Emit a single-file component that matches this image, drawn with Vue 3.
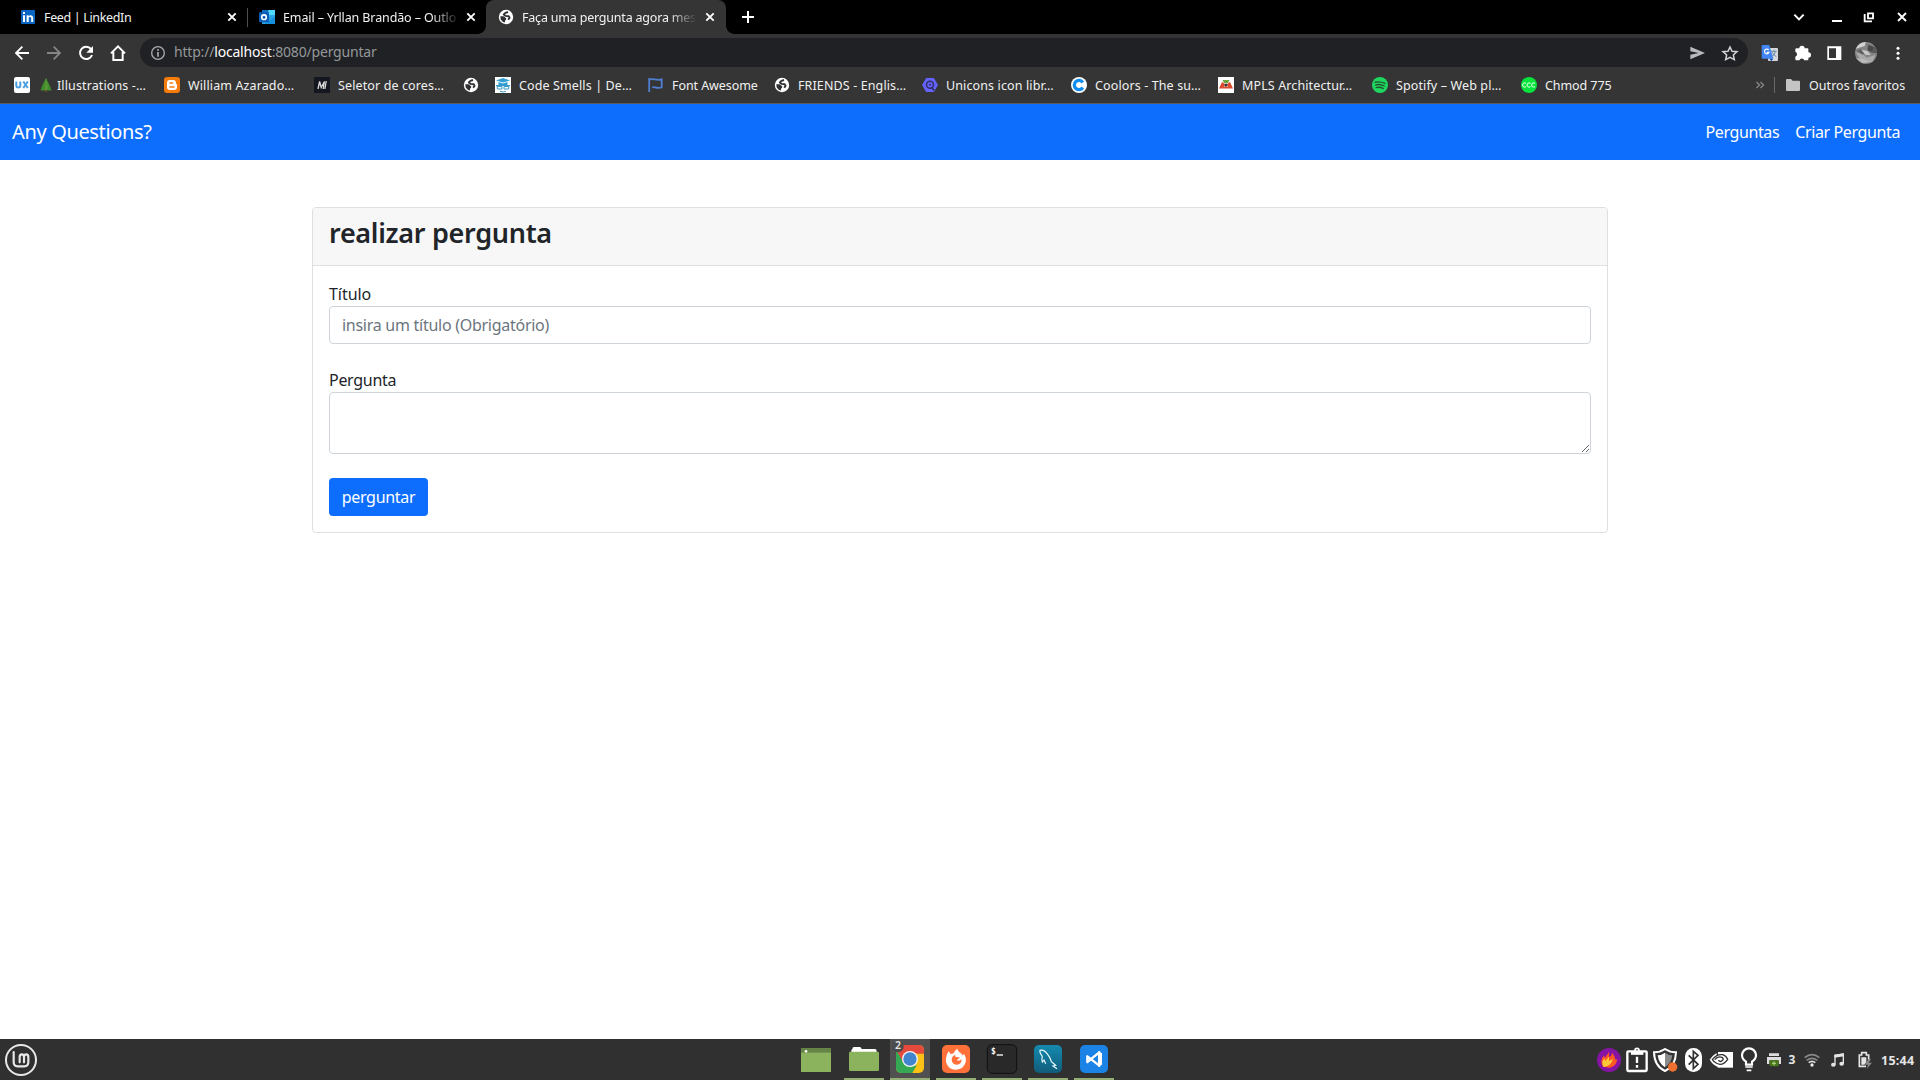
<script setup>
import { ref } from 'vue'

const title = ref('')
const question = ref('')

const bookmarks = [
  { id: 'ux', text: 'Illustrations -…', width: 150, tree: true },
  { id: 'blogger', text: 'William Azarado…', width: 150 },
  { id: 'm', text: 'Seletor de cores…', width: 149 },
  { id: 'globe', text: '', width: 32 },
  { id: 'code', text: 'Code Smells | De…', width: 153 },
  { id: 'flag', text: 'Font Awesome', width: 126 },
  { id: 'globe', text: 'FRIENDS - Englis…', width: 148 },
  { id: 'unicons', text: 'Unicons icon libr…', width: 149 },
  { id: 'coolors', text: 'Coolors - The su…', width: 147 },
  { id: 'mpls', text: 'MPLS Architectur…', width: 154 },
  { id: 'spotify', text: 'Spotify – Web pl…', width: 149 },
  { id: 'ccc', text: 'Chmod 775', width: 110 }
]
</script>

<template>
  <div class="screen">
    <svg class="defs" width="0" height="0">
      <symbol id="globe" viewBox="0 0 16 16">
        <circle cx="8" cy="8" r="7.2" fill="#fff" />
        <path d="M10 3 7.400 3.800 5.800 5.400 7.600 6.900 10.700 7.200 11.600 8.800 10.200 10.800" fill="none" stroke="#303134" stroke-width="1.900" stroke-linejoin="round" />
        <path d="M2.300 7.200h3.200l2.700 2-.2 1.800-1 .4v2L5 12.900l-2.300-2.400z" fill="#303134" />
      </symbol>
      <symbol id="close" viewBox="0 0 12 12"><path d="M2.300 2.300l7.400 7.400M9.700 2.300 2.300 9.700" stroke="#fff" stroke-width="1.900" /></symbol>
    </svg>

    <header class="browser">
      <div class="tabs">
        <div class="tab first">
          <svg width="14" height="14" viewBox="0 0 14 14"><rect width="14" height="14" rx="1" fill="#0a66c2" /><path d="M2 5.300h2V12H2zM2 2h2v2H2zM5.600 5.300h2v1c1-1.700 4.600-1.500 4.600 1.600V12h-2V8.400c0-1.900-2.500-1.800-2.500 0V12H5.600z" fill="#fff" /></svg>
          <span class="tab-text">Feed | LinkedIn</span>
          <svg class="x" width="12" height="12"><use href="#close" /></svg>
        </div>
        <div class="tab second">
          <svg width="16" height="16" viewBox="0 0 16 16"><path d="M3 1h13v14H3z" fill="#28a8ea" /><path d="M3 1h6.500v5H3z" fill="#0f6cbd" /><path d="M9.500 1H16v5H9.500z" fill="#50d9ff" /><path d="M3 9l13-2v8H3z" fill="#2ba2df" /><path d="M16 8v7H6z" fill="#1490df" /><rect y="3.200" width="10" height="10" rx="1" fill="#0a5eb8" /><circle cx="5" cy="8.200" r="2.300" fill="none" stroke="#fff" stroke-width="1.600" /></svg>
          <span class="tab-text">Email – Yrllan Brandão – Outlo</span>
          <svg class="x" width="12" height="12"><use href="#close" /></svg>
        </div>
        <div class="tab active">
          <svg width="16" height="16"><use href="#globe" /></svg>
          <span class="tab-text">Faça uma pergunta agora mes</span>
          <svg class="x" width="12" height="12"><use href="#close" /></svg>
        </div>
        <svg class="plus" width="14" height="14" viewBox="0 0 14 14"><path d="M7 1v12M1 7h12" stroke="#fff" stroke-width="2" /></svg>
        <svg class="window-buttons" width="132" height="34" viewBox="1032 0 396 102" fill="none" stroke="#fff">
          <path d="M1063 44l14 14 14-14" stroke-width="6" />
          <path d="M1176 63h30" stroke-width="6" />
          <path d="M1284 40h15v15h-15zM1274 42v22h22" stroke-width="5.500" />
          <path d="M1374 39l24 24M1398 39l-24 24" stroke-width="5.500" />
        </svg>
      </div>

      <div class="toolbar">
        <svg width="24" height="30" viewBox="30 111 72 90" fill="none" stroke="#fff" stroke-width="5.500"><path d="M87 156H50M67 137l-19 19 19 19" /></svg>
        <svg width="24" height="30" viewBox="126 111 72 90" fill="none" stroke="#858585" stroke-width="5.500"><path d="M141 156h37M161 137l19 19-19 19" /></svg>
        <svg width="24" height="30" viewBox="222 111 72 90"><path d="M273 144a18.500 18.500 0 1 0 3 18" fill="none" stroke="#fff" stroke-width="6" /><path d="M279 135v20h-20z" fill="#fff" /></svg>
        <svg width="24" height="30" viewBox="318 111 72 90" fill="none" stroke="#fff" stroke-width="6"><path d="M340 153v24h28v-24M333 157l21-21 21 21" /></svg>
        <div class="address">
          <svg width="18" height="18" viewBox="447 129 54 54"><circle cx="474" cy="156" r="19" fill="none" stroke="#a8abae" stroke-width="4" /><path d="M474 153v14M474 144v5" stroke="#a8abae" stroke-width="5" /></svg>
          <span class="url">http://<b>localhost</b>:8080/perguntar</span>
          <svg class="send" width="18" height="18" viewBox="745 129 54 54"><path d="M752 137l44 19-44 19v-14l25-5-25-5z" fill="#b8babd" /></svg>
          <svg width="18" height="18" viewBox="843 129 54 54"><path d="M870 138l6 13 15 1-11 10 3 14-13-7-13 7 3-14-11-10 15-1z" fill="none" stroke="#d0d2d4" stroke-width="4.500" /></svg>
        </div>
        <svg class="ext" width="24" height="30" viewBox="951 111 72 90">
          <rect x="984" y="141" width="30" height="39" rx="3" fill="#d5d8dc" /><path d="M993 151h17M1002 146v5M1007 151q-4 13-13 16M997 154q4 9 12 13" stroke="#6f8aa8" stroke-width="3" fill="none" />
          <path d="M968 132h20l12 41h-32q-3 0-3-3v-35q0-3 3-3z" fill="#4285f4" /><path d="M988 173h12l-6 8z" fill="#2457b8" /><path d="M986 147a7 7 0 1 0 1 7h-7" stroke="#fff" stroke-width="3.500" fill="none" />
        </svg>
        <svg class="ext" width="24" height="30" viewBox="1049 111 72 90"><path d="M1069 142h8a8 8 0 0 1 16 0h9q2 0 2 3v9a8 8 0 0 1 0 16v6q0 2-3 2h-9a8 8 0 0 0-15 0h-9q-3 0-3-3v-8a8 8 0 0 0 0-15v-7q0-3 4-3z" fill="#fff" /></svg>
        <svg class="ext" width="24" height="30" viewBox="1145 111 72 90"><path d="M1161 136h42v41h-42zM1166 142v29h21v-29z" fill="#fff" fill-rule="evenodd" /></svg>
        <svg class="avatar" width="24" height="30" viewBox="1242 111 72 90">
          <defs><clipPath id="round"><circle cx="1278" cy="156" r="33" /></clipPath></defs>
          <g clip-path="url(#round)"><path d="M1245 123h66v66h-66z" fill="#858585" /><path d="M1245 123h32l-3 12-29 9z" fill="#d2d2d2" /><path d="M1283 130l28 10v17l-17-2-11-12z" fill="#595959" /><circle cx="1291" cy="143" r="8" fill="#484848" /><path d="M1247 154l20 4 13 12 26-8-9 22h-30z" fill="#a9a9a9" /><path d="M1249 149l14-5 14 10-9 7z" fill="#606060" /><path d="M1264 146l18 4 11 12-17-1z" fill="#c9c9c9" /><path d="M1246 171l22 3 25 8-24 5z" fill="#bababa" /></g>
        </svg>
        <svg class="menu" width="24" height="30" viewBox="1340 111 72 90" fill="#fff"><circle cx="1376" cy="142" r="4.500" /><circle cx="1376" cy="157" r="4.500" /><circle cx="1376" cy="172" r="4.500" /></svg>
      </div>

      <div class="bookmarks">
        <div v-for="(b, i) in bookmarks" :key="i" class="bookmark" :style="{ width: b.width + 'px' }">
          <svg width="16" height="16" viewBox="0 0 16 16">
            <template v-if="b.id === 'ux'"><rect width="16" height="16" rx="2" fill="#fff" /><path d="M2.300 4.500v4a2 2 0 0 0 4 0v-4M9.300 4.500l4.500 6.500M13.800 4.500 9.300 11" fill="none" stroke="#4a9fe0" stroke-width="2" /></template>
            <template v-else-if="b.id === 'blogger'"><rect width="16" height="16" rx="3" fill="#f57c0b" /><path d="M5.500 3h3.200C12 3 12 5 12 6.500c0 .7 1 .3 1 1.500v2c0 2-1 3-3 3H5.500C4 13 3 12 3 10.500v-5C3 4 4 3 5.500 3z" fill="#fff" /><path d="M6 6h2.500M6 10h4" stroke="#f57c0b" stroke-width="1.500" stroke-linecap="round" /></template>
            <template v-else-if="b.id === 'm'"><rect width="16" height="16" fill="#14171f" /><path d="M4 12 5.600 4.500l1.600 6 3.200-6L9.200 12M12.200 4l-1.300 8" stroke="#d8d8d8" stroke-width="1.300" fill="none" /></template>
            <use v-else-if="b.id === 'globe'" href="#globe" />
            <template v-else-if="b.id === 'code'"><path d="M0 0h16v16H0z" fill="#fff" /><path d="M1 3.500 8 1l7 2.500-7 2zM3.500 5l4.500 1.500L12.500 5v3.500h-9z" fill="#2f9fd2" /><path d="M2 9.500h5v2.500H2.500zM9 9.500h5l-.5 2.500H9zM5 14.300q3 1.400 6 0M1 8.500h14" stroke="#3a9bc8" fill="none" /></template>
            <path v-else-if="b.id === 'flag'" d="M1.200 1v14M1.200 2.500c5-1.500 6 1.500 12.500 0v8c-6 1.600-7-1.400-9.500 0" fill="none" stroke="#4f7fd0" stroke-width="1.800" />
            <template v-else-if="b.id === 'unicons'"><path d="M4.200 1h7.600L16 8l-4.200 7H4.200L0 8z" fill="#6563ff" /><circle cx="8" cy="7.800" r="3.500" fill="none" stroke="#312f60" stroke-width="1.500" /><circle cx="8" cy="7.800" r="1" fill="#312f60" /><path d="M10 10.500l2 3" stroke="#312f60" stroke-width="1.500" /></template>
            <template v-else-if="b.id === 'coolors'"><circle cx="8" cy="8" r="8" fill="#fff" /><path d="M11.800 5.500A4.600 4.600 0 1 0 11.800 10.500" fill="none" stroke="#118df2" stroke-width="3.300" /></template>
            <template v-else-if="b.id === 'mpls'"><path d="M0 0h16v16H0z" fill="#fff" /><path d="M4.500 3h7l-1.500 3H6z" fill="#70a43d" /><path d="M4 5 1 11.500h4L7 7zM12 5l3 6.500h-4L9 7zM6 9.500h4l1 2H5z" fill="#dc492b" /><circle cx="8" cy="8" r="1.600" fill="#333" /></template>
            <template v-else-if="b.id === 'spotify'"><circle cx="8" cy="8" r="8" fill="#1ed760" /><path d="M3.200 5.300q5-1.300 9.800 1.100M3.800 8q4.500-1.200 8.400 1M4.200 10.600q4-1 7 1" fill="none" stroke="#24542f" stroke-width="1.400" stroke-linecap="round" /></template>
            <template v-else><circle cx="8" cy="8" r="8" fill="#06e33c" /><path d="M5 6.500a2 2 0 1 0 0 3M9.500 6.500a2 2 0 1 0 0 3M14 6.500a2 2 0 1 0 0 3" fill="none" stroke="#b4ffbf" stroke-width="1.200" /></template>
          </svg>
          <svg v-if="b.tree" class="tree" width="12" height="16" viewBox="0 0 12 16"><path d="M6 1 10 9l1.500 4.500H.500L2 9z" fill="#3f8a2c" /><path d="M6 1 8 9v4H4z" fill="#549535" /><path d="M5 13.500h2V15H5z" fill="#71472a" /></svg>
          <span>{{ b.text }}</span>
        </div>
        <svg class="chevrons" width="10" height="10" viewBox="0 0 10 10"><path d="M1.500 2l3 3-3 3M5.500 2l3 3-3 3" fill="none" stroke="#858585" stroke-width="1.400" /></svg>
        <i class="divider"></i>
        <svg class="folder" width="14" height="12" viewBox="0 0 14 12"><path d="M1 0h4l1.500 1.700H13q1 0 1 1V11q0 1-1 1H1q-1 0-1-1V1q0-1 1-1z" fill="#c4c4c4" /></svg>
        <span class="others">Outros favoritos</span>
      </div>
    </header>

    <nav class="navbar">
      <a class="brand">Any Questions?</a>
      <a class="link perguntas">Perguntas</a>
      <a class="link criar">Criar Pergunta</a>
    </nav>

    <main class="page">
      <form class="card" @submit.prevent>
        <div class="card-header"><h2>realizar pergunta</h2></div>
        <div class="card-body">
          <label for="titulo">Título</label>
          <input id="titulo" v-model="title" class="control" placeholder="insira um título (Obrigatório)" />
          <label for="descricao" class="spaced">Pergunta</label>
          <textarea id="descricao" v-model="question" class="control area"></textarea>
          <button class="submit" type="submit">perguntar</button>
        </div>
      </form>
    </main>

    <footer class="panel">
      <svg class="mint" width="34" height="34" viewBox="12 39 102 102" fill="none" stroke="#e8e8e8"><circle cx="63" cy="90" r="45" stroke-width="6" /><path d="M41 66v31q0 12 12 12h20q12 0 12-12V81q0-8-6.500-8T72 81v16M72 81q0-8-6.500-8T59 81v16" stroke-width="6.500" stroke-linecap="round" /></svg>
      <div class="apps">
        <div class="app plain"><svg width="40" height="41" viewBox="48 27 120 123"><path d="M63 54h90v72H63z" fill="#8bb35d" /><path d="M63 54h90v14H63z" fill="#668445" /><circle cx="78" cy="64" r="4" fill="#fff" /></svg></div>
        <div class="app run"><svg width="40" height="41" viewBox="192 27 120 123"><path d="M217 58q0-7 5-7h17q5 0 6 6h40q5 0 5 7v12h-76V60z" fill="#fff" /><rect x="207" y="65" width="90" height="58" rx="4" fill="#8bb35d" /></svg></div>
        <div class="app run current">
          <svg width="40" height="41" viewBox="330 27 120 123">
            <defs><clipPath id="tile"><rect x="348" y="45" width="84" height="84" rx="15" /></clipPath></defs>
            <g clip-path="url(#tile)"><path d="M348 45h84v84h-84z" fill="#fbc116" /><path d="M348 45h84v26h-42l-22 27-20-36z" fill="#e64a3c" /><path d="M348 58l22 40 20 13 20-5-13 23h-49z" fill="#34a853" /></g>
            <circle cx="390" cy="87" r="24" fill="#f4f4f4" /><circle cx="390" cy="87" r="20" fill="#4285cf" />
            <circle cx="354" cy="50" r="17" fill="#4b4b4b" />
          </svg><span class="count">2</span>
        </div>
        <div class="app run"><svg width="40" height="41" viewBox="468 27 120 123"><rect x="486" y="45" width="84" height="84" rx="15" fill="#ff7139" /><path d="M506 64l6 8 9-2q3-9 11-14 1 8 9 12 4 3 6 8l5-4q8 12 5 25-6 21-29 22-25-1-30-24-1-18 8-31z" fill="#fff" /><path d="M526 74q-2 6 4 8h9q-1 5-9 8 8 6 14-3 3 13-11 17-17 0-18-15 0-10 11-15z" fill="#ff7139" /></svg></div>
        <div class="app run"><svg width="40" height="41" viewBox="606 27 120 123"><rect x="622" y="44" width="88" height="86" rx="14" fill="#292929" stroke="#101010" stroke-width="3" /><text x="633" y="73" class="prompt">$</text><path d="M650 75h19" stroke="#fff" stroke-width="4" /></svg></div>
        <div class="app run"><svg width="40" height="41" viewBox="744 27 120 123"><defs><linearGradient id="sea" x2="0" y2="1"><stop stop-color="#148baf" /><stop offset="1" stop-color="#125c7c" /></linearGradient></defs><rect x="762" y="45" width="84" height="84" rx="15" fill="url(#sea)" /><path d="M797 101l-5-11-5 6q-3-8 0-17-9-12-7-18 12-3 23 12 8 10 11 22l13 11-8 2 12 8" fill="none" stroke="#e9fbff" stroke-width="3.500" /></svg></div>
        <div class="app run"><svg width="40" height="41" viewBox="882 27 120 123"><rect x="900" y="45" width="84" height="84" rx="15" fill="#1b82e6" /><path d="M922 79v17M922 79l36 28M922 96l36-29" fill="none" stroke="#fff" stroke-width="7" stroke-linejoin="round" stroke-linecap="round" /><path d="M954 64l12 6v34l-12 6z" fill="#fff" /></svg></div>
      </div>
      <div class="tray">
        <svg width="28" height="28" viewBox="45 48 84 84"><circle cx="87" cy="90" r="36" fill="#8514a5" /><path d="M69 110q-11-17 3-34l2 8 13-18v15l7-4 2-9q9 9 11 22l5-4q-2 21-22 27z" fill="#ff5a24" /><path d="M70 110q-8-14 4-25l2 8 11-13v13l12-6q-5 19-23 23z" fill="#ffc839" /></svg>
        <svg width="28" height="28" viewBox="129 48 84 84" fill="none" stroke="#fff"><rect x="142" y="64" width="58" height="59" rx="3" stroke-width="7" /><path d="M153 70h37" stroke-width="9" /><circle cx="171" cy="61" r="6" stroke-width="5" /><path d="M171 80v19M171 105v8" stroke-width="7" /></svg>
        <svg width="28" height="28" viewBox="213 48 84 84"><path d="M255 57q15 10 33 10-1 42-33 56-32-14-33-56 18 0 33-10z" fill="#333" stroke="#fff" stroke-width="6" /><path d="M255 68v44q-19-11-22-36 11 0 22-8z" fill="#fff" /><path d="M255 68v44q19-11 22-36-11 0-22-8z" fill="#8a8a8a" /><circle cx="278" cy="111" r="14" fill="#f07030" /></svg>
        <svg width="28" height="28" viewBox="297 48 84 84"><rect x="315" y="54" width="51" height="72" rx="25" fill="#fff" /><path d="M326 76l28 27-14 13V64l14 12-28 28" fill="none" stroke="#303030" stroke-width="5" /></svg>
        <svg width="29" height="28" viewBox="381 48 87 84"><path d="M413 66h46v47h-46z" fill="#fff" /><path d="M389 89q15-23 39-22 15 2 24 21-10 22-33 23-18-2-30-22z" fill="#fff" /><path d="M397 89q12-17 31-15 10 3 15 14-10 15-23 15-14-2-23-14zM404 89q10-12 22-7 7 5 0 10-5 5-11-1M412 66v8" fill="none" stroke="#333" stroke-width="4" /></svg>
        <svg width="26" height="28" viewBox="468 48 78 84" fill="none" stroke="#fff"><path d="M498 104v-9q-12-8-12-19a21 21 0 0 1 42 0q0 11-12 19v9z" stroke-width="6.500" /><path d="M496 111h22M500 121h14" stroke-width="5" /></svg>
        <svg width="22" height="28" viewBox="546 48 66 84"><path d="M567 70h30v8h-30zM561 81h42v21h-7V91h-28v11h-7z" fill="#ddd" /><rect x="569" y="91" width="27" height="18" rx="3" fill="#48761a" /><path d="M582 94v12M576 100h12" stroke="#b6dc8a" stroke-width="3" /></svg>
        <span class="jobs">3</span>
        <svg width="24" height="28" viewBox="660 48 72 84" fill="none"><path d="M674 83q22-18 44 0M680 91q16-12 32 0" stroke="#888" stroke-width="5" /><path d="M686 98q10-8 20 0" stroke="#ddd" stroke-width="5" /><circle cx="696" cy="105" r="5" fill="#eee" /></svg>
        <svg width="27" height="28" viewBox="732 48 81 84"><path d="M765 104V76l25-4v29" fill="none" stroke="#e5e5e5" stroke-width="4" /><path d="M763 74l29-4v9l-29 4z" fill="#e5e5e5" /><ellipse cx="760" cy="104" rx="7" ry="6" fill="#e5e5e5" /><ellipse cx="785" cy="101" rx="7" ry="6" fill="#e5e5e5" /></svg>
        <svg width="28" height="28" viewBox="813 48 84 84"><path d="M858 109h-20V75h7v-7h14v7h7v15" fill="none" stroke="#e5e5e5" stroke-width="5" /><path d="M844 82h15v14l-6 8h-9z" fill="#e5e5e5" /><path d="M866 87l-12 17h10l-4 13 16-19h-10l7-11z" fill="#888" /></svg>
        <span class="clock">15:44</span>
      </div>
    </footer>
  </div>
</template>

<style>
body { margin: 0; overflow: hidden; }
</style>

<style scoped>
* { box-sizing: border-box; }
.screen { width: 1920px; height: 1080px; display: flex; flex-direction: column; font-family: "Noto Sans", "Open Sans", sans-serif; background: #fff; color: #212529; }
svg { display: block; flex: none; }
.defs { position: absolute; }
.browser { height: 104px; flex: none; background: #353535; border-bottom: 1px solid #5b5b5b; color: #f1f1f1; }
.tabs { height: 34px; background: #000; display: flex; align-items: center; font-size: 12.5px; }
.tab { height: 34px; display: flex; align-items: center; white-space: nowrap; }
.tab-text { line-height: 20px; margin-right: auto; padding-top: 1px; }
.first { width: 248px; padding: 0 10px 0 21px; position: relative; }
.first::after { content: ""; position: absolute; right: 0; top: 8px; height: 19px; width: 1px; background: #505050; }
.first .tab-text { margin-left: 9px; letter-spacing: -.35px; }
.second { width: 238px; padding: 0 9px 0 11px; }
.second .tab-text { margin-left: 8px; width: 177px; letter-spacing: -.12px; }
.second .tab-text, .active .tab-text { -webkit-mask-image: linear-gradient(90deg, #000 84%, transparent); mask-image: linear-gradient(90deg, #000 84%, transparent); }
.active { width: 240px; padding: 0 10px 0 12px; background: #353535; border-radius: 8px 8px 0 0; position: relative; }
.active::before, .active::after { content: ""; position: absolute; bottom: 0; width: 8px; height: 8px; }
.active::before { left: -8px; background: radial-gradient(circle at 0 0, transparent 7.5px, #353535 8px); }
.active::after { right: -8px; background: radial-gradient(circle at 100% 0, transparent 7.5px, #353535 8px); }
.active .tab-text { margin-left: 8px; width: 175px; letter-spacing: -.2px; }
.plus { margin-left: 15px; }
.window-buttons { margin-left: auto; margin-right: 4px; }
.toolbar { height: 37px; display: flex; align-items: center; padding: 0 7px 0 10px; }
.toolbar > svg + svg { margin-left: 8px; }
.toolbar > .ext + .ext { margin-left: 8.500px; }
.address { width: 1608px; flex: none; height: 29px; margin: 0 9px 0 10px; padding: 0 9px; border-radius: 15px; background: #202124; display: flex; align-items: center; }
.url { margin-left: 7px; color: #95989b; font-size: 14px; line-height: 24px; letter-spacing: -.19px; padding-bottom: 2px; }
.url b { font-weight: 400; color: #fff; }
.send { margin-left: auto; margin-right: 15px; }
.bookmarks { height: 28px; display: flex; align-items: center; padding-left: 14px; font-size: 12.5px; white-space: nowrap; }
.bookmark { display: flex; align-items: center; flex: none; }
.bookmark span { margin-left: 8px; line-height: 20px; letter-spacing: .12px; padding-top: 1px; }
.bookmark:nth-child(6) span, .bookmark:nth-child(12) span { letter-spacing: -.08px; }
.bookmark .tree { margin-left: 10px; }
.bookmark .tree + span { margin-left: 5px; }
.chevrons { margin-left: 124px; }
.divider { width: 1px; height: 16px; background: #686868; margin: 0 11px 0 9px; }
.others { margin-left: 9px; line-height: 20px; letter-spacing: .05px; padding-top: 1px; }
.navbar { height: 56px; flex: none; background: #0d6efd; color: #fff; display: flex; align-items: center; padding: 0 20px 0 12px; }
.brand { font-size: 20px; letter-spacing: -.35px; margin-right: auto; padding-bottom: 2px; }
.link { font-size: 16px; letter-spacing: -.38px; white-space: nowrap; }
.criar { margin-left: 16px; }
.page { flex: 1; padding: 47px 312px 0; }
.card { height: 326px; border: 1px solid #dfdfdf; border-radius: 4px; }
.card-header { height: 58px; padding: 8px 16px; background: #f7f7f7; border-bottom: 1px solid #dfdfdf; border-radius: 3px 3px 0 0; }
h2 { margin: 0; font-size: 27px; font-weight: 600; line-height: 34px; letter-spacing: -.3px; }
.card-body { padding: 16px; display: flex; flex-direction: column; font-size: 16px; }
label { height: 24px; line-height: 24px; letter-spacing: -.3px; }
label[for="titulo"] { letter-spacing: -.05px; }
.spaced { margin-top: 24px; }
.control { display: block; width: 100%; height: 38px; border: 1px solid #ced4da; border-radius: 4px; padding: 6px 12px; font: inherit; letter-spacing: -.27px; color: #212529; background: #fff; outline: none; }
.control::placeholder { color: #6c757d; }
.area { height: 62px; }
.submit { margin-top: 24px; width: 99px; height: 38px; padding: 0; border: 0; border-radius: 4px; background: #0d6efd; color: #fff; font: inherit; letter-spacing: -.3px; }
.panel { height: 41px; flex: none; background: #303030; display: flex; align-items: center; color: #e5e5e5; }
.mint { margin-left: 4px; }
.apps { display: flex; height: 41px; margin-left: 758px; gap: 6px; }
.app { position: relative; width: 40px; height: 41px; }
.plain { margin-right: 2px; }
.run::after { content: ""; position: absolute; left: 0; right: 0; bottom: 0; height: 2px; background: #94ae75; }
.current { background: #505050; }
.count { position: absolute; left: 5px; top: 0; font-size: 10.5px; line-height: 13px; font-weight: 600; }
.prompt { font: bold 24px "DejaVu Sans Mono", monospace; fill: #fff; }
.tray { margin-left: auto; display: flex; align-items: center; }
.jobs { width: 16px; text-align: center; font-size: 12px; font-weight: 700; }
.clock { width: 41px; padding-left: 2px; font-size: 12.5px; font-weight: 700; letter-spacing: .25px; padding-top: 1px; }
</style>
